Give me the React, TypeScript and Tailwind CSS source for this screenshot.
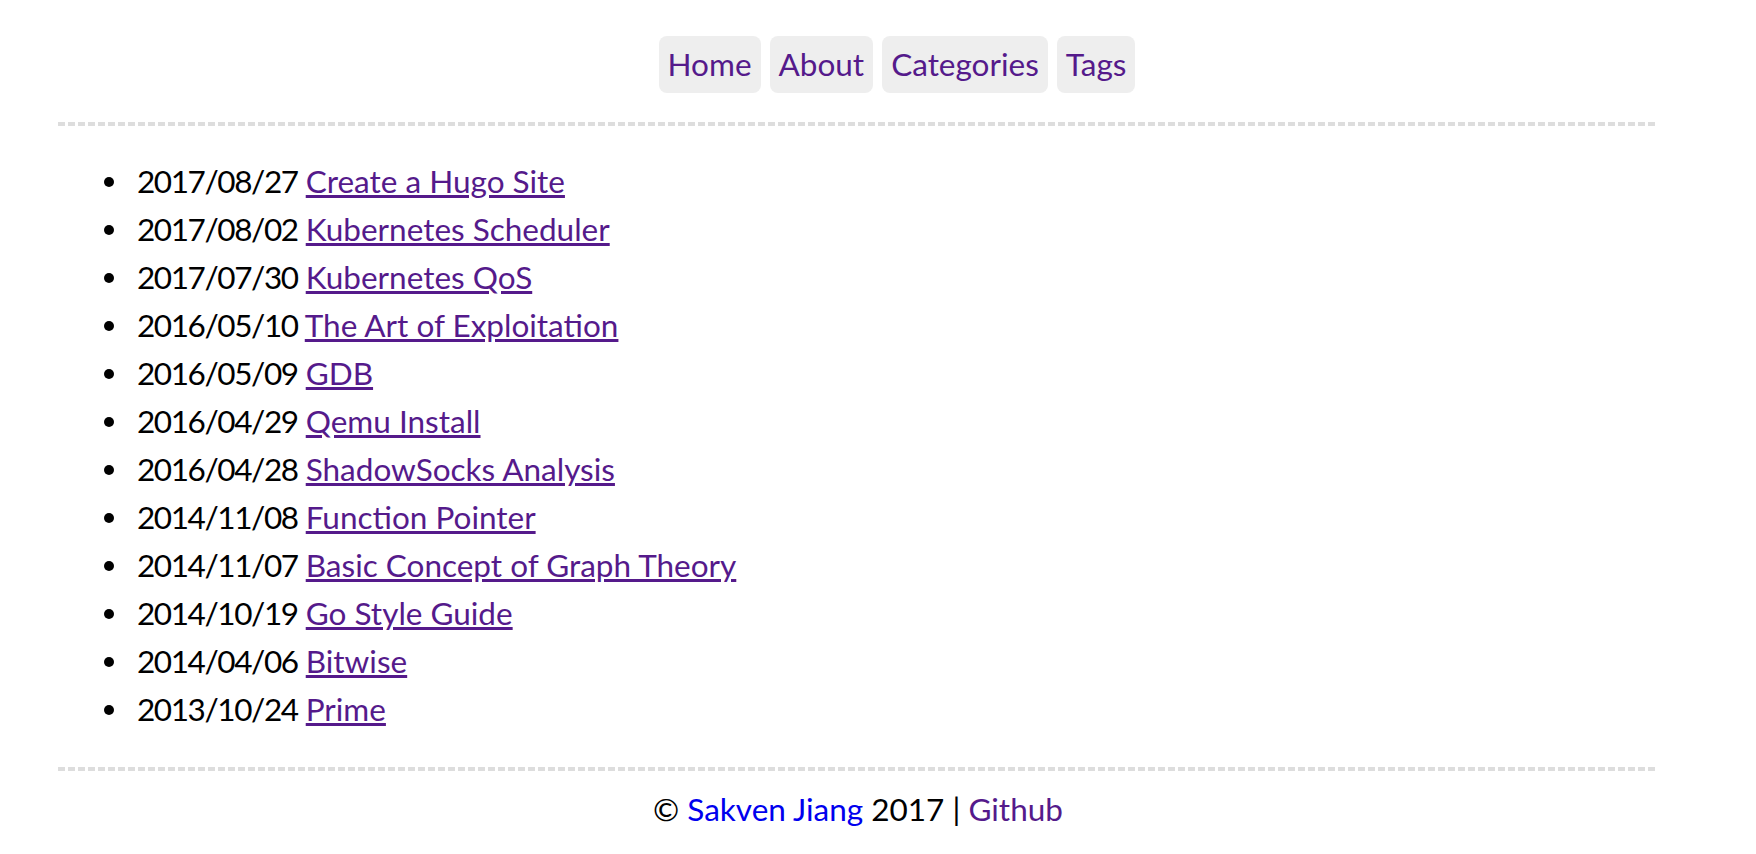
import React from "react";

const posts: [string, string][] = [
  ["2017/08/27", "Create a Hugo Site"],
  ["2017/08/02", "Kubernetes Scheduler"],
  ["2017/07/30", "Kubernetes QoS"],
  ["2016/05/10", "The Art of Exploitation"],
  ["2016/05/09", "GDB"],
  ["2016/04/29", "Qemu Install"],
  ["2016/04/28", "ShadowSocks Analysis"],
  ["2014/11/08", "Function Pointer"],
  ["2014/11/07", "Basic Concept of Graph Theory"],
  ["2014/10/19", "Go Style Guide"],
  ["2014/04/06", "Bitwise"],
  ["2013/10/24", "Prime"],
];

function Dashed() {
  return (
    <div className="h-[4px] w-full bg-[repeating-linear-gradient(90deg,#dddddd_0px,#dddddd_7px,transparent_7px,transparent_10px)]" />
  );
}

export default function App() {
  return (
    <div
      className="min-h-[854px] bg-white text-black"
      style={{ fontFamily: "Lato, 'Noto Sans', sans-serif" }}
    >
      <div className="ml-[58px] w-[1600px] text-[31.5px]">
        <nav className="flex justify-center gap-[9px] pl-[78px] pt-[36px]">
          {["Home", "About", "Categories", "Tags"].map((n) => (
            <a
              key={n}
              href="#"
              className="flex h-[57px] items-center rounded-[8px] bg-[#eeeeee] px-[9px] text-[#551a8b]"
            >
              {n}
            </a>
          ))}
        </nav>
        <div className="mt-[29px]">
          <Dashed />
        </div>
        <ul className="mt-[31px] pl-[46px] leading-[48px]">
          {posts.map(([d, t]) => (
            <li key={t} className="whitespace-nowrap">
              <span className="mr-[23px] inline-block h-[10px] w-[10px] rounded-full bg-black align-[6px]" />
              <span className="tracking-[-1.4px]">{d}</span>{" "}
              <a href="#" className="text-[#551a8b] underline">
                {t}
              </a>
            </li>
          ))}
        </ul>
        <div className="mt-[34px]">
          <Dashed />
        </div>
        <footer className="mt-[18px] text-center leading-[40px]">
          © <a href="#" className="text-[#0000ee]">Sakven Jiang</a> 2017 |{" "}
          <a href="#" className="text-[#551a8b]">Github</a>
        </footer>
      </div>
    </div>
  );
}
